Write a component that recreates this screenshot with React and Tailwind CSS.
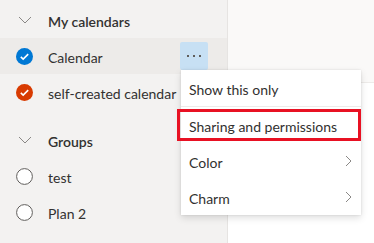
import { useState } from "react";

const Chevron = ({ className = "" }) => (
  <svg width="14" height="8" viewBox="0 0 14 8" className={className}>
    <path d="M1 1l6 6 6-6" fill="none" stroke="#8a8886" strokeWidth="1" />
  </svg>
);

const CheckCircle = ({ color }) => (
  <svg width="17" height="17" viewBox="0 0 17 17">
    <circle cx="8.5" cy="8.5" r="8.5" fill={color} />
    <path d="M4.8 8.8l2.4 2.3 5-5" fill="none" stroke="#fff" strokeWidth="1.6" />
  </svg>
);

const EmptyCircle = () => (
  <svg width="17" height="17" viewBox="0 0 17 17">
    <circle cx="8.5" cy="8.5" r="7.9" fill="#fff" stroke="#605e5c" strokeWidth="1" />
  </svg>
);

const Header = ({ label }) => (
  <div className="flex h-[36px] items-center">
    <div className="flex w-[48px] justify-center pl-[1px]">
      <Chevron />
    </div>
    <span className="pt-[3px] font-semibold text-[#323130]">{label}</span>
  </div>
);

const Row = ({ icon, label, active, children }) => (
  <div
    className={`flex h-[36px] items-center ${active ? "bg-[#edebe9]" : ""}`}
  >
    <div className="flex w-[48px] justify-center">{icon}</div>
    <span className="flex-1 whitespace-nowrap pt-[3px] text-[#323130]">{label}</span>
    {children}
  </div>
);

const MenuItem = ({ label, sub }) => (
  <div className="flex h-[36px] items-center justify-between pl-[8px] pr-[9px] text-[#323130]">
    <span className="whitespace-nowrap pt-[3px]">{label}</span>
    {sub && (
      <svg width="7" height="12" viewBox="0 0 7 12">
        <path d="M1 1l5 5-5 5" fill="none" stroke="#8a8886" strokeWidth="1" />
      </svg>
    )}
  </div>
);

export default function App() {
  const [open] = useState(true);

  return (
    <div
      className="relative flex h-[243px] w-[374px] overflow-hidden text-[14px]"
      style={{ fontFamily: '"Segoe UI", Lato, sans-serif' }}
    >
      {/* Sidebar */}
      <div className="w-[228px] shrink-0 border-r border-[#e6e4e2] bg-[#f3f2f1] pt-[2px]">
        <Header label="My calendars" />
        <Row active icon={<CheckCircle color="#0078d4" />} label="Calendar">
          <button className="mr-[19px] flex h-[28px] w-[28px] items-center justify-center gap-[4px] rounded-[2px] bg-[#c7e0f4]">
            <span className="h-[2px] w-[2px] bg-[#605e5c]" />
            <span className="h-[2px] w-[2px] bg-[#605e5c]" />
            <span className="h-[2px] w-[2px] bg-[#605e5c]" />
          </button>
        </Row>
        <Row icon={<CheckCircle color="#d83b01" />} label="self-created calendar" />
        <div className="h-[12px]" />
        <Header label="Groups" />
        <Row icon={<EmptyCircle />} label="test" />
        <Row icon={<EmptyCircle />} label="Plan 2" />
      </div>

      {/* Main area */}
      <div className="flex flex-1 flex-col">
        <div className="h-[83px] border-b border-[#edebe9] bg-[#faf9f8]" />
        <div className="flex-1 bg-white" />
      </div>

      {/* Context menu */}
      {open && (
        <div className="absolute left-[181px] top-[70px] w-[180px] bg-white shadow-[0_3px_7px_rgba(0,0,0,0.13),0_0_2px_rgba(0,0,0,0.11)]">
          <MenuItem label="Show this only" />
          <div className="h-[1px] bg-[#edebe9]" />
          <MenuItem label="Sharing and permissions" />
          <MenuItem label="Color" sub />
          <MenuItem label="Charm" sub />
        </div>
      )}

      {/* Highlight annotation */}
      <div className="absolute left-[177px] top-[109px] h-[32px] w-[184px] border-[3px] border-[#e81123]" />
    </div>
  );
}
